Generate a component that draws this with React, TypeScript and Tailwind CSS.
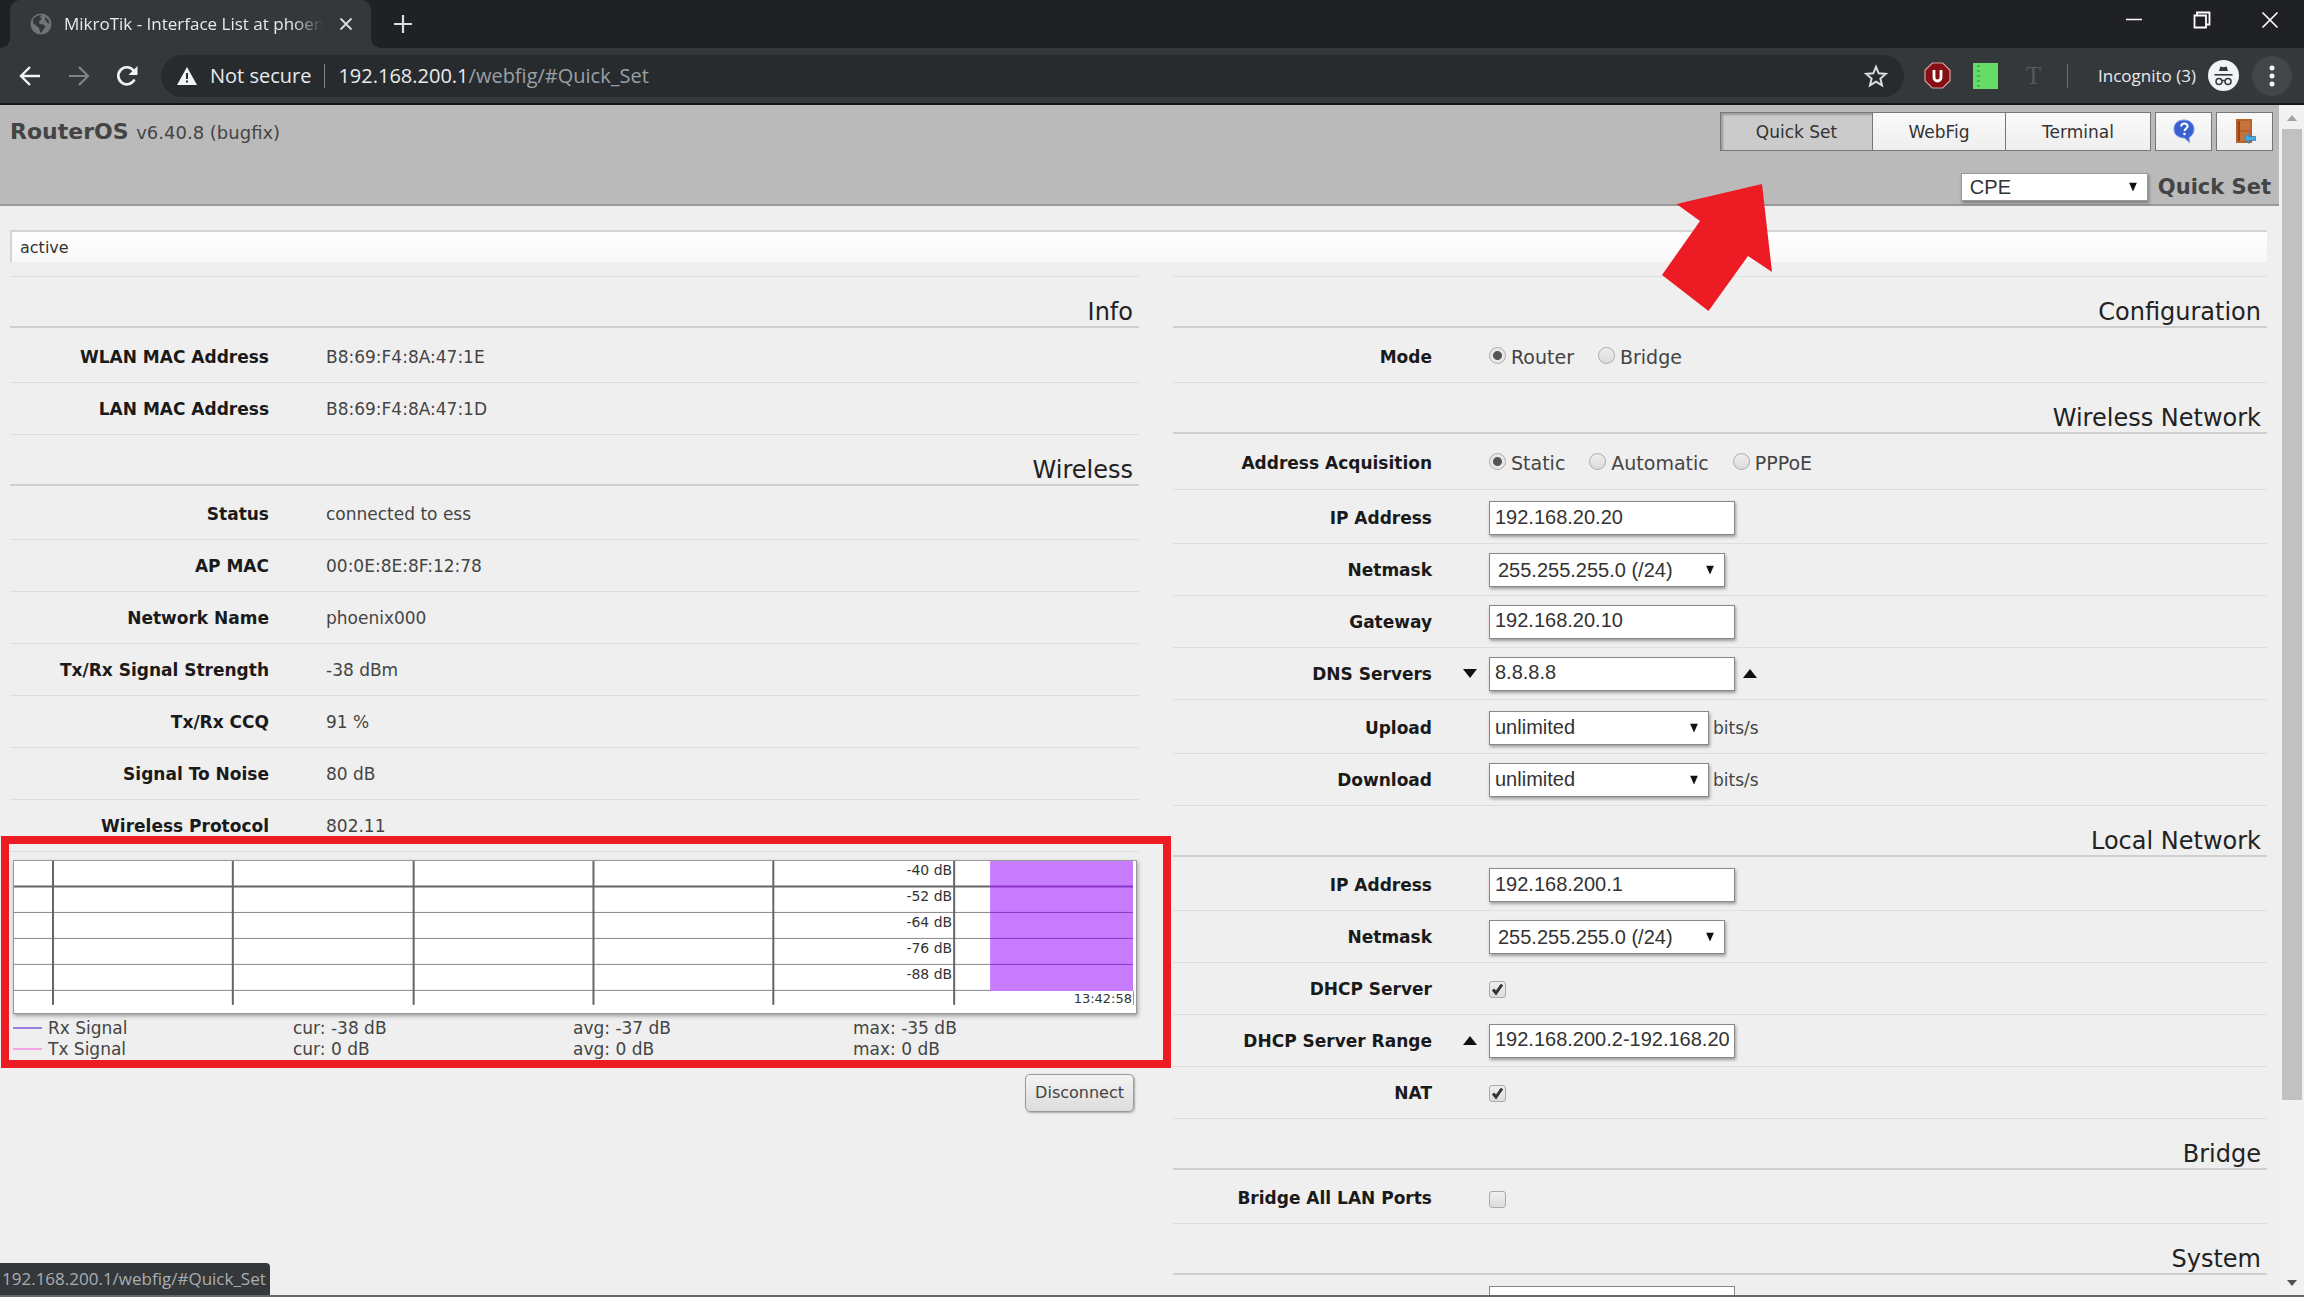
import { useId, type ReactNode } from 'react';

const SIGNAL_LEVELS = ['-40 dB', '-52 dB', '-64 dB', '-76 dB', '-88 dB'];
const TIME_LINES = [39, 219, 400, 580, 760, 941];

const LEGEND = [
  { name: 'Rx Signal', color: 'bg-[#9a7fe0]', cur: '-38 dB', avg: '-37 dB', max: '-35 dB' },
  { name: 'Tx Signal', color: 'bg-[#f2a6e6]', cur: '0 dB', avg: '0 dB', max: '0 dB' },
];

function GlobeIcon() {
  return (
    <svg viewBox="0 0 22 22" className="size-[22px] shrink-0" aria-hidden="true">
      <circle cx="11" cy="11" r="10.5" fill="#6f7376" />
      <path d="M3 6.5C5 3.5 8 2 11.5 2L10 4.5l2 1.5-3 2.5.5 2.5 4 .5 2 2.5-2.5 3-1.5 3c-1.500-.5-2-3-2.500-5L6 12.500 3 10z" fill="#35383b" />
      <path d="M15 4l3.500 3 1 4-2.500-1.500-2-3z" fill="#35383b" />
    </svg>
  );
}

function IncognitoIcon() {
  return (
    <svg viewBox="0 0 31 31" className="size-[31px] shrink-0" aria-hidden="true">
      <circle cx="15.500" cy="15.500" r="15.500" fill="#f1f3f4" />
      <path d="M11 11l1.300-4.500 3.200.8 3.200-.8L20 11z" fill="#35383b" />
      <path d="M6.500 14h18v1.600h-18z" fill="#35383b" />
      <circle cx="11" cy="21.500" r="3" fill="none" stroke="#35383b" strokeWidth="1.500" />
      <circle cx="20" cy="21.500" r="3" fill="none" stroke="#35383b" strokeWidth="1.500" />
      <path d="M14 21q1.500-1 3 0" fill="none" stroke="#35383b" strokeWidth="1.300" />
    </svg>
  );
}

function Browser() {
  return (
    <header className="shrink-0 bg-[#202124] font-['Open_Sans',sans-serif] text-[#e8eaed]">
      <div className="flex h-12 items-stretch justify-between">
        <div className="flex pl-[10px]">
          <div className="relative flex w-[361px] items-center rounded-t-[10px] bg-[#35383b] pr-[14px] pl-5">
            <span className="absolute bottom-0 -left-[10px] size-[10px] bg-[radial-gradient(circle_at_top_left,transparent_10px,#35383b_10px)]" />
            <span className="absolute -right-[10px] bottom-0 size-[10px] bg-[radial-gradient(circle_at_top_right,transparent_10px,#35383b_10px)]" />
            <GlobeIcon />
            <span className="ml-3 h-6 flex-1 overflow-hidden [mask-image:linear-gradient(to_right,black_88%,transparent)] text-[17px] leading-6 whitespace-nowrap">
              MikroTik - Interface List at phoenix
            </span>
            <button aria-label="Close tab" className="ml-3 p-1">
              <svg viewBox="0 0 14 14" className="size-[14px]"><path d="M1.500 1.500l11 11m0-11l-11 11" stroke="#dadce0" strokeWidth="1.800" /></svg>
            </button>
          </div>
          <button aria-label="New tab" className="ml-[17px] p-[5px]">
            <svg viewBox="0 0 20 20" className="size-5"><path d="M10 1v18M1 10h18" stroke="#dadce0" strokeWidth="2.200" /></svg>
          </button>
        </div>
        <div className="flex items-center gap-[50px] pr-[25px] pb-2">
          <button aria-label="Minimize">
            <svg viewBox="0 0 18 18" className="size-[18px]"><path d="M1 8.500h16" stroke="#fff" strokeWidth="1.500" /></svg>
          </button>
          <button aria-label="Restore">
            <svg viewBox="0 0 18 18" className="size-[18px]" fill="none" stroke="#fff" strokeWidth="1.800"><path d="M1.500 4.500h11.500v12H1.500z" /><path d="M4 4V1.500h12.500v12H13" /></svg>
          </button>
          <button aria-label="Close">
            <svg viewBox="0 0 18 18" className="size-[18px]"><path d="M1.500 1.500l15 15m0-15l-15 15" stroke="#fff" strokeWidth="1.600" /></svg>
          </button>
        </div>
      </div>

      <div className="flex h-[57px] items-center border-b-2 border-[#151617] bg-[#35383b] pr-3 pl-[18px]">
        <button aria-label="Back">
          <svg viewBox="0 0 24 24" className="size-6" fill="none" stroke="#f1f3f4" strokeWidth="2.400"><path d="M22 12H3.500M12 3l-9 9 9 9" /></svg>
        </button>
        <button aria-label="Forward" className="ml-[25px]">
          <svg viewBox="0 0 24 24" className="size-6" fill="none" stroke="#7f8386" strokeWidth="2.200"><path d="M2 12h18.500M12 3l9 9-9 9" /></svg>
        </button>
        <button aria-label="Reload" className="ml-[24px]">
          <svg viewBox="0 0 24 24" className="size-6"><path d="M19.500 15.500A8.500 8.500 0 1 1 18.500 6.500L20 8" fill="none" stroke="#f1f3f4" strokeWidth="2.600" /><path d="M22.500 2v9h-9z" fill="#f1f3f4" /></svg>
        </button>
        <div className="ml-[22px] flex h-[42px] flex-1 items-center rounded-full bg-[#282b2e] pr-4 pl-4">
          <svg viewBox="0 0 20 18" className="h-[18px] w-5" aria-hidden="true"><path d="M10 0l10 18H0z" fill="#f1f3f4" /><path d="M9 6h2v6H9zm0 7.500h2v2H9z" fill="#282b2e" /></svg>
          <span className="ml-[13px] text-[20px]">Not secure</span>
          <span className="mx-[13px] h-6 w-px bg-[#80868b]" />
          <span className="flex-1 text-[20px]">
            192.168.200.1<span className="text-[#9aa0a6]">/webfig/#Quick_Set</span>
          </span>
          <button aria-label="Bookmark this page">
            <svg viewBox="0 0 24 24" className="size-6" fill="none" stroke="#dadce0" strokeWidth="2"><path d="M12 2.800l2.700 6.500 7 .6-5.300 4.600 1.600 6.900-6-3.700-6 3.700 1.600-6.900-5.300-4.600 7-.6z" /></svg>
          </button>
        </div>
        <button aria-label="Content blocker" className="ml-5">
          <svg viewBox="0 0 27 27" className="size-[27px]"><path d="M8.300 1h10.400L26 8.300v10.400L18.700 26H8.300L1 18.700V8.300z" fill="#850f12" stroke="#d9a0a0" strokeWidth="1.200" /><path d="M10 8v7.500a3.500 3.500 0 0 0 7 0V8" fill="none" stroke="#fff" strokeWidth="2.800" /></svg>
        </button>
        <button aria-label="Notes" className="ml-[22px]">
          <svg viewBox="0 0 25 26" className="h-[26px] w-[25px]"><path d="M0 0h25v26H0z" fill="#64dc67" /><path d="M5.500 2v22" stroke="#45b84c" strokeWidth="3" strokeDasharray="2 3" /></svg>
        </button>
        <button aria-label="Text tool" className="ml-[28px] font-['Liberation_Serif',serif] text-[25px] leading-6 text-[#56595c]">T</button>
        <span className="ml-[26px] h-6 w-px bg-[#6a6d70]" />
        <span className="mr-3 ml-[30px] text-[17px]">Incognito (3)</span>
        <IncognitoIcon />
        <button aria-label="Menu" className="ml-[13px] flex size-10 items-center justify-center rounded-full bg-[#434649]">
          <svg viewBox="0 0 6 22" className="h-[22px] w-[6px]" fill="#f1f3f4"><circle cx="3" cy="3" r="2.500" /><circle cx="3" cy="11" r="2.500" /><circle cx="3" cy="19" r="2.500" /></svg>
        </button>
      </div>
    </header>
  );
}

function PointerArrow() {
  return (
    <svg viewBox="0 0 110 127" className="pointer-events-none absolute top-[79px] right-[507px] z-10 h-[127px] w-[110px]" aria-hidden="true">
      <path d="M100 0L110 88 86 72 46.500 127 0 91 38 37 14.500 20z" fill="#ed1c24" />
    </svg>
  );
}

function NavButton({ children, active = false, width }: { children: ReactNode; active?: boolean; width: string }) {
  return (
    <button
      className={`${width} ${active ? 'bg-[#cbcbcb] shadow-[inset_2px_2px_2px_#9a9a9a]' : 'bg-linear-to-b from-[#fafafa] to-[#eeeeee]'} h-[37px] border-r border-[#777] pt-[2px] last:border-r-0`}
    >
      {children}
    </button>
  );
}

function TitleBar() {
  return (
    <div className="relative flex h-[101px] shrink-0 items-start justify-between border-b-2 border-[#999] bg-[#bababa] pt-[7px] pr-[6px] pl-[10px]">
      <h1 className="text-[22px] leading-[40px] font-bold text-[#444]">
        RouterOS <span className="text-[18px] font-normal">v6.40.8 (bugfix)</span>
      </h1>
      <div className="flex flex-col items-end">
        <nav className="flex gap-1 text-[17px] text-[#333]">
          <div className="flex border border-[#777]">
            <NavButton active width="w-[152px]">Quick Set</NavButton>
            <NavButton width="w-[133px]">WebFig</NavButton>
            <NavButton width="w-[144px]">Terminal</NavButton>
          </div>
          <button aria-label="Help" className="flex h-[39px] w-[57px] items-center justify-center border border-[#777] bg-linear-to-b from-[#fafafa] to-[#eeeeee] pb-[2px]">
            <svg viewBox="0 0 24 24" className="size-6"><path d="M12 1c6 0 10 4 10 9 0 4-2 7-5 8.500l.5 5-5-4.500C6 19 2 15.500 2 10S6 1 12 1z" fill="#3a5fd0" stroke="#7f9ae8" /><path d="M9 7.500c.3-2 1.500-3 3.300-3 2 0 3.300 1.100 3.300 2.800 0 2.200-3 2.400-3 4.700" fill="none" stroke="#fff" strokeWidth="2" /><circle cx="12.400" cy="15" r="1.300" fill="#fff" /></svg>
          </button>
          <button aria-label="Log out" className="flex h-[39px] w-[57px] items-center justify-center border border-[#777] bg-linear-to-b from-[#fafafa] to-[#eeeeee] pb-[2px]">
            <svg viewBox="0 0 24 26" className="h-[26px] w-6"><path d="M3 1h16v24H3z" fill="#b5622c" /><path d="M5 3h12v9H5zM5 14h12v9H5z" fill="#c4733a" /><path d="M5 3h2v20H5z" fill="#96481c" /><path d="M11 20l5-4.500v3h6.500v4H16v3z" fill="#4fa8dc" stroke="#2a7fb5" strokeWidth=".8" /></svg>
          </button>
        </nav>
        <div className="mt-[22px] flex items-center gap-[10px] pr-[2px]">
          <SelectBox label="Quick Set mode" value="CPE" className="w-[187px]" size="h-7 border-[#999] pl-2" />
          <h2 className="text-[21px] leading-7 font-bold text-[#444]">Quick Set</h2>
        </div>
      </div>
      <PointerArrow />
    </div>
  );
}

function SelectBox({ id, label, value, className, size = 'h-[34px] border-[#888] pl-2' }: { id?: string; label?: string; value: string; className: string; size?: string }) {
  return (
    <span className={`relative inline-flex ${className}`}>
      <select
        id={id}
        aria-label={label}
        defaultValue={value}
        className={`${size} w-full appearance-none border bg-white font-['Liberation_Sans',sans-serif] text-[20px] leading-6 text-[#333] shadow-[1px_2px_3px_rgba(0,0,0,0.35)]`}
      >
        <option>{value}</option>
      </select>
      <svg viewBox="0 0 8 9" className="pointer-events-none absolute top-1/2 right-[11px] h-[9px] w-2 -translate-y-1/2" aria-hidden="true">
        <path d="M0 0h8L4 9z" fill="#111" />
      </svg>
    </span>
  );
}

function TextBox({ id, value }: { id?: string; value: string }) {
  return (
    <input
      id={id}
      type="text"
      defaultValue={value}
      className="h-[34px] w-[246px] border border-[#888] bg-white px-[5px] pb-[2px] font-['Liberation_Sans',sans-serif] text-[20px] text-[#333] shadow-[1px_2px_3px_rgba(0,0,0,0.35)]"
    />
  );
}

function CheckBox({ id, checked = false }: { id?: string; checked?: boolean }) {
  return (
    <span className="relative mt-[2px] inline-flex">
      <input id={id} type="checkbox" defaultChecked={checked} className="peer size-[17px] appearance-none rounded-[3px] border border-[#aaa] bg-linear-to-b from-[#f0f0f0] to-[#dcdcdc]" />
      <svg viewBox="0 0 17 17" className="pointer-events-none absolute inset-0 hidden size-[17px] peer-checked:block" aria-hidden="true">
        <path d="M4 8.500l3 3.500 6-8.500" fill="none" stroke="#333" strokeWidth="3" />
      </svg>
    </span>
  );
}

function RadioGroup({ name, options }: { name: string; options: string[] }) {
  return (
    <span className="flex gap-6 pt-px">
      {options.map((option, i) => (
        <label key={option} className="flex items-center gap-[5px] text-[19px] leading-6">
          <input
            type="radio"
            name={name}
            defaultChecked={i === 0}
            className="mb-1 size-[17px] appearance-none rounded-full border border-[#aaa] bg-linear-to-b from-[#eee] to-[#dcdcdc] checked:bg-[radial-gradient(circle,#555_4px,#e8e8e8_5px)]"
          />
          {option}
        </label>
      ))}
    </span>
  );
}

function Caret({ up = false, label }: { up?: boolean; label: string }) {
  return (
    <button aria-label={label} className="shrink-0">
      <svg viewBox="0 0 14 9" className="h-[9px] w-[14px]"><path d={up ? 'M0 9h14L7 0z' : 'M0 0h14L7 9z'} fill="#111" /></svg>
    </button>
  );
}

const ROW_HEIGHT = {
  normal: 'h-[52px]',
  first: 'h-[54px] pt-[3px]',
  firstTall: 'h-[55px] pt-[3px]',
  radios: 'h-[56px] pt-[2px]',
};

function Row({
  label,
  children,
  lead,
  kind = 'normal',
}: {
  label: string;
  children: ReactNode | ((id: string) => ReactNode);
  lead?: ReactNode;
  kind?: keyof typeof ROW_HEIGHT;
}) {
  const id = useId();
  return (
    <div className={`${ROW_HEIGHT[kind]} flex items-center border-b border-[#ddd]`}>
      <label htmlFor={id} className="w-[259px] shrink-0 pt-[2px] text-right text-[17px] font-bold text-[#1a1a1a]">{label}</label>
      <span className="flex w-[57px] shrink-0 justify-end pr-3">{lead}</span>
      {typeof children === 'function' ? (
        <div className="flex items-center">{children(id)}</div>
      ) : typeof children === 'string' ? (
        <output id={id} className="pt-[2px]">{children}</output>
      ) : (
        children
      )}
    </div>
  );
}

function SectionTitle({ children }: { children: ReactNode }) {
  return (
    <h3 className="h-[51px] border-b-2 border-[#cfcfcf] pt-[21px] pr-[6px] text-right text-[24px] leading-7 text-[#222]">
      {children}
    </h3>
  );
}

function SignalChart() {
  return (
    <svg viewBox="0 0 1123 152" className="block h-auto w-full border border-[#999] bg-white shadow-[1px_2px_4px_rgba(0,0,0,0.35)]" role="img" aria-label="Signal strength over time">
      {[25, 51, 77, 103, 129].map((y) => (
        <path key={y} d={`M0 ${y}.5H1120`} stroke={y === 25 ? '#666' : '#888'} strokeWidth={y === 25 ? 2 : 1} />
      ))}
      {TIME_LINES.map((x) => (
        <path key={x} d={`M${x} 0V144`} stroke="#666" strokeWidth="2" />
      ))}
      <path d="M977 0h143v130H977z" fill="#c77bff" />
      {[25, 51, 77, 103].map((y) => (
        <path key={y} d={`M977 ${y}.5h143`} stroke="#8a35c8" strokeWidth={y === 25 ? 2 : 1} />
      ))}
      <path d="M1120.500 130v14" stroke="#999" />
      <g fontFamily="DejaVu Sans, sans-serif" fontSize="14" fill="#333" textAnchor="end">
        {SIGNAL_LEVELS.map((level, i) => (
          <text key={level} x="939" y={14 + i * 26}>{level}</text>
        ))}
        <text x="1119" y="142" fontSize="13">13:42:58</text>
      </g>
    </svg>
  );
}

function StatusColumn() {
  return (
    <section className="flex flex-1 flex-col border-t border-[#ddd]">
      <SectionTitle>Info</SectionTitle>
      <Row label="WLAN MAC Address" kind="firstTall">B8:69:F4:8A:47:1E</Row>
      <Row label="LAN MAC Address">B8:69:F4:8A:47:1D</Row>
      <SectionTitle>Wireless</SectionTitle>
      <Row label="Status" kind="first">connected to ess</Row>
      <Row label="AP MAC">00:0E:8E:8F:12:78</Row>
      <Row label="Network Name">phoenix000</Row>
      <Row label="Tx/Rx Signal Strength">-38 dBm</Row>
      <Row label="Tx/Rx CCQ">91 %</Row>
      <Row label="Signal To Noise">80 dB</Row>
      <Row label="Wireless Protocol">802.11</Row>
      <div className="relative mt-2 mr-[2px] ml-[3px]">
        <SignalChart />
        <div className="mt-1 pr-1">
          <table className="w-full table-fixed leading-[21px]">
            <tbody>
              {LEGEND.map((entry) => (
                <tr key={entry.name}>
                  <th scope="row" className="p-0 text-left font-normal">
                    <span className="flex items-center gap-[6px]">
                      <span className={`${entry.color} h-[2px] w-[29px]`} />
                      {entry.name}
                    </span>
                  </th>
                  <td className="p-0">cur: {entry.cur}</td>
                  <td className="p-0">avg: {entry.avg}</td>
                  <td className="p-0">max: {entry.max}</td>
                </tr>
              ))}
            </tbody>
          </table>
        </div>
        <div className="pointer-events-none absolute -top-[24px] -right-[34px] -bottom-[8px] -left-[12px] border-8 border-[#ed1c24]" />
      </div>
      <button className="mt-[14px] mr-[5px] h-[38px] self-end rounded-[5px] border border-[#999] bg-linear-to-b from-[#f4f4f4] to-[#dcdcdc] px-[9px] text-[16px] shadow-[1px_1px_2px_rgba(0,0,0,0.3)]">
        Disconnect
      </button>
    </section>
  );
}

function RateRow({ label, kind }: { label: string; kind?: 'first' }) {
  return (
    <Row label={label} kind={kind}>
      {(id) => (
        <>
          <SelectBox id={id} value="unlimited" className="mr-1 w-[220px]" size="h-[34px] border-[#888] pb-[2px] pl-[5px]" />
          <span className="pt-[2px]">bits/s</span>
        </>
      )}
    </Row>
  );
}

function SettingsColumn() {
  return (
    <section className="flex flex-1 flex-col border-t border-[#ddd]">
      <SectionTitle>Configuration</SectionTitle>
      <Row label="Mode" kind="firstTall"><RadioGroup name="mode" options={['Router', 'Bridge']} /></Row>
      <SectionTitle>Wireless Network</SectionTitle>
      <Row label="Address Acquisition" kind="radios"><RadioGroup name="acquisition" options={['Static', 'Automatic', 'PPPoE']} /></Row>
      <Row label="IP Address" kind="first">{(id) => <TextBox id={id} value="192.168.20.20" />}</Row>
      <Row label="Netmask">{(id) => <SelectBox id={id} value="255.255.255.0 (/24)" className="w-[236px]" />}</Row>
      <Row label="Gateway">{(id) => <TextBox id={id} value="192.168.20.10" />}</Row>
      <Row label="DNS Servers" lead={<Caret label="Add DNS server" />}>
        {(id) => (
          <span className="flex items-center gap-2">
            <TextBox id={id} value="8.8.8.8" />
            <Caret up label="Remove DNS server" />
          </span>
        )}
      </Row>
      <RateRow label="Upload" kind="first" />
      <RateRow label="Download" />
      <SectionTitle>Local Network</SectionTitle>
      <Row label="IP Address" kind="first">{(id) => <TextBox id={id} value="192.168.200.1" />}</Row>
      <Row label="Netmask">{(id) => <SelectBox id={id} value="255.255.255.0 (/24)" className="w-[236px]" />}</Row>
      <Row label="DHCP Server">{(id) => <CheckBox id={id} checked />}</Row>
      <Row label="DHCP Server Range" lead={<Caret up label="Clear range" />}>
        {(id) => <TextBox id={id} value="192.168.200.2-192.168.20" />}
      </Row>
      <Row label="NAT">{(id) => <CheckBox id={id} checked />}</Row>
      <SectionTitle>Bridge</SectionTitle>
      <Row label="Bridge All LAN Ports" kind="first">{(id) => <CheckBox id={id} />}</Row>
      <SectionTitle>System</SectionTitle>
      <div className="pt-[11px] pl-[316px]">
        <input type="text" aria-label="System identity" className="block h-[34px] w-[246px] border border-[#888] bg-white" />
      </div>
    </section>
  );
}

function Scrollbar() {
  return (
    <div className="flex w-[25px] shrink-0 flex-col items-end bg-[#f1f1f1] pr-[2px]" aria-hidden="true">
      <svg viewBox="0 0 20 24" className="h-6 w-5"><path d="M5 16h10l-5-6z" fill="#a3a3a3" /></svg>
      <div className="w-5 flex-[971] bg-[#c1c1c1]" />
      <div className="w-5 flex-[171]" />
      <svg viewBox="0 0 20 24" className="h-6 w-5"><path d="M5 9h10l-5 6z" fill="#505050" /></svg>
    </div>
  );
}

export default function App() {
  return (
    <div className="relative flex h-screen flex-col overflow-hidden border-b-2 border-[#666] bg-[#efefef] font-['DejaVu_Sans',sans-serif] text-[17px] text-[#444]">
      <Browser />
      <div className="flex min-h-0 flex-1">
        <main className="flex min-w-0 flex-1 flex-col overflow-hidden">
          <TitleBar />
          <div className="px-[10px] pt-6">
            <p className="mr-[2px] h-8 border-t-2 border-l-2 border-[#d4d4d4] bg-white bg-linear-to-b from-white to-[#f8f8f8] pl-2 text-[16px] leading-8 text-[#333]">active</p>
            <div className="mt-[14px] mr-[2px] flex gap-[34px]">
              <div className="flex flex-[1129]"><StatusColumn /></div>
              <div className="flex flex-[1094]"><SettingsColumn /></div>
            </div>
          </div>
        </main>
        <Scrollbar />
      </div>
      <div className="absolute bottom-0 left-0 rounded-tr-[4px] bg-[#35383b] py-1 pr-1 pl-[2px] font-['Open_Sans',sans-serif] text-[17px] leading-6 text-[#a9adb1]">
        192.168.200.1/webfig/#Quick_Set
      </div>
    </div>
  );
}
